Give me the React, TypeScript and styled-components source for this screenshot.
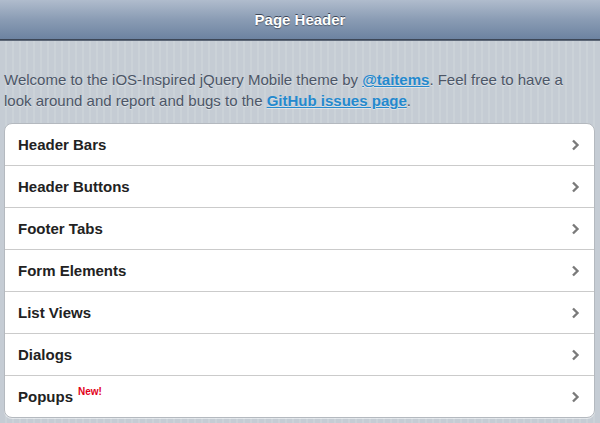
import React from 'react'
import styled, { createGlobalStyle } from 'styled-components'

const GlobalStyle = createGlobalStyle`
  html, body {
    margin: 0;
    padding: 0;
  }
  body {
    font-family: 'Liberation Sans', Arial, sans-serif;
    background-color: #c5ccd4;
    background-image: repeating-linear-gradient(
      90deg,
      #c5ccd4 0px,
      #c5ccd4 5px,
      #cbd2d8 5px,
      #cbd2d8 7px
    );
    min-height: 423px;
  }
`

const Header = styled.header`
  height: 39px;
  display: flex;
  align-items: center;
  justify-content: center;
  background: linear-gradient(#b0bccd 0%, #8a9cb4 50%, #6d83a1 100%);
  border-bottom: 1px solid #3d4757;
  box-shadow: 0 1px 0 #5d6878;
`

const Title = styled.h1`
  margin: 0;
  font-size: 15px;
  font-weight: bold;
  color: #fff;
  text-shadow: 0 -1px 0 #3b4658, 0 1px 1px rgba(0, 0, 0, 0.35);
`

const Content = styled.main`
  padding: 29px 5px 0 4px;
`

const Intro = styled.p`
  margin: 0 0 12px;
  padding-right: 24px;
  font-size: 15px;
  line-height: 21px;
  color: #4c5667;
  text-shadow: 0 1px 0 rgba(255, 255, 255, 0.4);
`

const Link = styled.a`
  color: #2489ce;
  font-weight: bold;
  text-decoration: underline;
`

const List = styled.ul`
  list-style: none;
  margin: 0;
  padding: 0;
  background: #fff;
  border: 1px solid #b4b9bf;
  border-radius: 8px;
  overflow: hidden;
  box-shadow: 0 1px 0 rgba(255, 255, 255, 0.5);
`

const Item = styled.li`
  height: 41px;
  display: flex;
  align-items: center;
  padding: 0 14px 0 13px;
  border-top: 1px solid #cbcbcb;
  &:first-child {
    border-top: none;
  }
`

const Label = styled.span`
  flex: 1;
  font-size: 15px;
  font-weight: bold;
  color: #222;
  text-shadow: 0 1px 0 #fff;
`

const Badge = styled.sup`
  margin-left: 5px;
  font-size: 10px;
  font-weight: bold;
  color: #e2001a;
  vertical-align: 7px;
  line-height: 0;
`

const Chevron = () => (
  <svg width="9" height="12" viewBox="0 0 9 12">
    <path d="M2 1.5 L6.5 6 L2 10.5" fill="none" stroke="#7a7a7a" strokeWidth="2.4" />
  </svg>
)

const items: { label: string; isNew?: boolean }[] = [
  { label: 'Header Bars' },
  { label: 'Header Buttons' },
  { label: 'Footer Tabs' },
  { label: 'Form Elements' },
  { label: 'List Views' },
  { label: 'Dialogs' },
  { label: 'Popups', isNew: true },
]

const App: React.FC = () => {
  return (
    <>
      <GlobalStyle />
      <Header>
        <Title>Page Header</Title>
      </Header>
      <Content>
        <Intro>
          Welcome to the iOS-Inspired jQuery Mobile theme by <Link href='#'>@taitems</Link>. Feel free to have a
          look around and report and bugs to the <Link href='#'>GitHub issues page</Link>.
        </Intro>
        <List>
          {items.map((item) => (
            <Item key={item.label}>
              <Label>
                {item.label}
                {item.isNew && <Badge>New!</Badge>}
              </Label>
              <Chevron />
            </Item>
          ))}
        </List>
      </Content>
    </>
  )
}

export default App
